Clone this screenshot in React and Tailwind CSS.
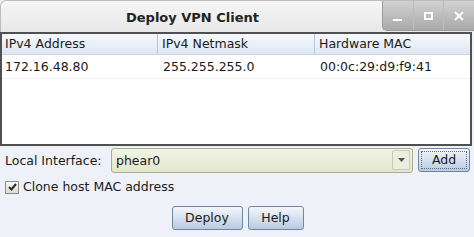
export default function App() {
  const font = { fontFamily: '"DejaVu Sans", "Liberation Sans", sans-serif' };
  return (
    <div className="w-[474px] h-[237px] bg-[#eef2f8] flex flex-col overflow-hidden text-[12.5px] text-[#1a1a1a]" style={font}>
      {/* Title bar */}
      <div className="h-[32px] flex items-start bg-gradient-to-b from-[#f6f6f6] to-[#e8e8e8] rounded-tl-[6px] border-t border-l border-[#bcbcbc]">
        <div className="flex-1 h-[32px] flex items-center justify-center pl-[2px] pt-[1px]">
          <span className="font-bold text-[13px] text-[#222]">Deploy VPN Client</span>
        </div>
        <div className="flex h-[30px] w-[92px] rounded-bl-[5px] overflow-hidden border-l border-b border-[#9a9a9a] bg-gradient-to-b from-[#d2d2d2] to-[#a9a9a9]">
          <div className="flex-1 flex items-center justify-center border-r border-[#bdbdbd]">
            <div className="w-[9px] h-[2px] bg-white mt-[8px]" />
          </div>
          <div className="flex-1 flex items-center justify-center border-r border-[#bdbdbd]">
            <div className="w-[9px] h-[8px] border-2 border-white" />
          </div>
          <div className="flex-1 flex items-center justify-center">
            <svg width="10" height="10" viewBox="0 0 10 10"><path d="M1 1L9 9M9 1L1 9" stroke="white" strokeWidth="2" /></svg>
          </div>
        </div>
      </div>
      {/* Table */}
      <div className="h-[114px] mr-[2px] border-2 border-[#505050] bg-white flex flex-col">
        <div className="h-[21px] flex bg-gradient-to-b from-[#f6f9fd] to-[#dde7f3] border-b border-[#c9d4e2]">
          <div className="w-[156px] pl-[3px] flex items-center border-r border-[#b9c6d8]">IPv4 Address</div>
          <div className="w-[157px] pl-[4px] flex items-center border-r border-[#b9c6d8]">IPv4 Netmask</div>
          <div className="flex-1 pl-[4px] flex items-center">Hardware MAC</div>
        </div>
        <div className="h-[24px] flex border-b border-[#eef0f4] pt-[1px]">
          <div className="w-[156px] pl-[3px] flex items-center">172.16.48.80</div>
          <div className="w-[157px] pl-[5px] flex items-center">255.255.255.0</div>
          <div className="flex-1 pl-[5px] flex items-center">00:0c:29:d9:f9:41</div>
        </div>
      </div>
      {/* Local interface row */}
      <div className="flex items-center mt-[2px] h-[24px]">
        <span className="pl-[5px] w-[111px] pt-[2px]">Local Interface:</span>
        <div className="w-[302px] h-[25px] rounded-[3px] border border-[#a9ad92] bg-gradient-to-b from-[#f2f4e6] to-[#e2e6cc] flex items-center">
          <span className="flex-1 pl-[4px] pt-[2px]">phear0</span>
          <div className="w-[18px] h-[20px] mr-[2px] rounded-[2px] border border-[#c8cbb6] bg-[#eceee0] flex items-center justify-center">
            <svg width="7" height="4" viewBox="0 0 7 4"><path d="M0 0H7L3.5 4Z" fill="#555" /></svg>
          </div>
        </div>
        <div className="ml-[5px] w-[52px] h-[24px] rounded-[3px] border border-[#6e86a3] bg-gradient-to-b from-[#f4f7fb] to-[#b9cbe0] flex items-center justify-center">
          <div className="w-[46px] h-[18px] border border-dotted border-[#5a6f8a] flex items-center justify-center">Add</div>
        </div>
      </div>
      {/* Checkbox */}
      <div className="flex items-center mt-[8px] pl-[5px] h-[14px]">
        <div className="w-[14px] h-[13px] border border-[#8a8a8a] bg-gradient-to-b from-[#f8f8f0] to-[#dcdcc8] flex items-center justify-center">
          <svg width="9" height="8" viewBox="0 0 9 8"><path d="M1 4L3.5 6.5L8 1" stroke="#2a2a2a" strokeWidth="2" fill="none" /></svg>
        </div>
        <span className="ml-[4px]">Clone host MAC address</span>
      </div>
      {/* Buttons */}
      <div className="flex justify-center gap-[5px] mt-[12px] pl-[1px]">
        <div className="w-[71px] h-[24px] rounded-[3px] border border-[#6e86a3] bg-gradient-to-b from-[#f4f7fb] to-[#b9cbe0] flex items-center justify-center">Deploy</div>
        <div className="w-[56px] h-[24px] rounded-[3px] border border-[#6e86a3] bg-gradient-to-b from-[#f4f7fb] to-[#b9cbe0] flex items-center justify-center">Help</div>
      </div>
    </div>
  );
}
